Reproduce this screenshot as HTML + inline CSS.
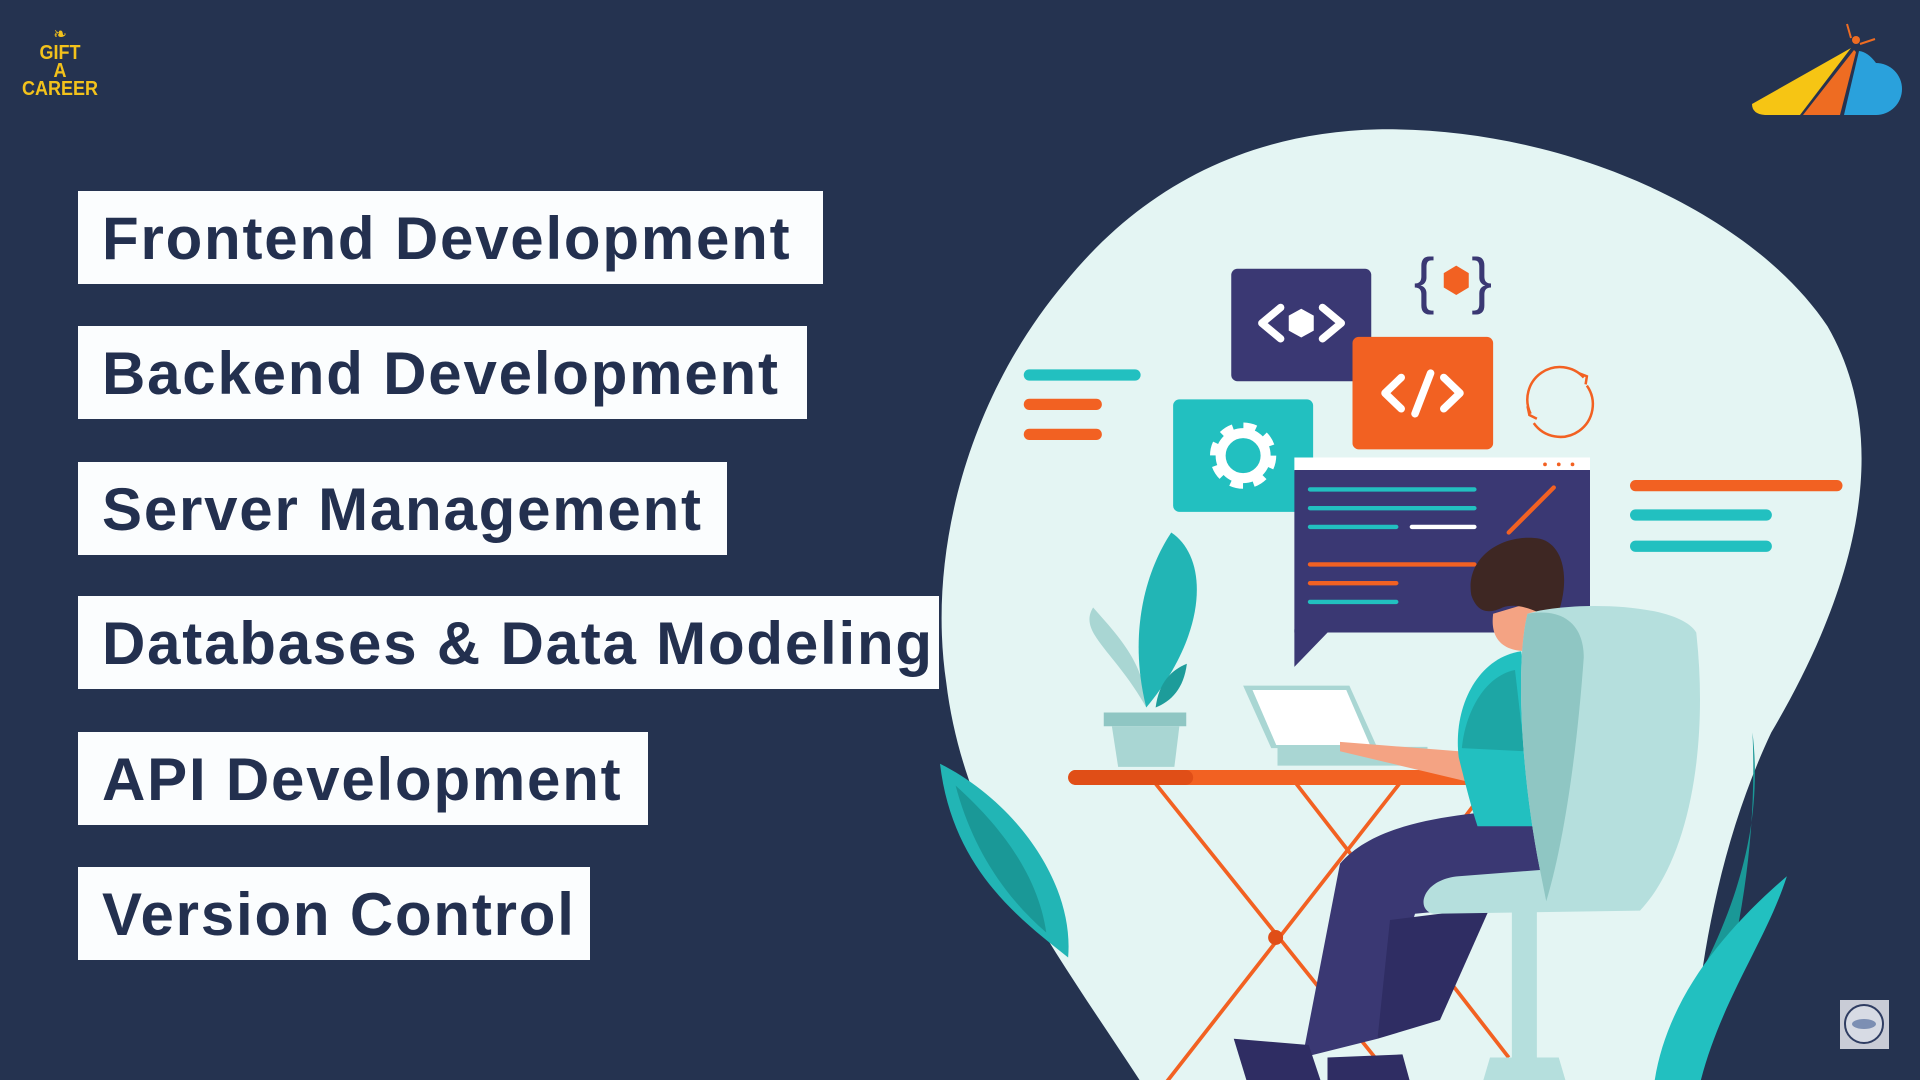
<!DOCTYPE html>
<html><head><meta charset="utf-8"><style>
html,body{margin:0;padding:0;}
body{width:1920px;height:1080px;background:#253350;position:relative;overflow:hidden;font-family:"Liberation Sans",sans-serif;}
.box{position:absolute;left:78px;height:93px;background:#fbfdfe;color:#23304f;font-weight:bold;font-size:60px;line-height:95px;padding-left:24px;box-sizing:border-box;white-space:nowrap;letter-spacing:1.8px;}
.logo{position:absolute;left:14px;top:24px;width:92px;text-align:center;color:#f3c21b;font-family:"Liberation Sans Narrow","Liberation Sans",sans-serif;font-weight:bold;font-size:20px;line-height:18px;transform:scaleX(0.9);}
svg{position:absolute;left:0;top:0;}
</style></head><body>
<div class="logo"><div style="font-size:18px;line-height:20px;font-weight:normal">&#x2767;</div>GIFT<br>A<br>CAREER</div>
<div class="box" style="top:191px;width:745px">Frontend Development</div>
<div class="box" style="top:326px;width:729px">Backend Development</div>
<div class="box" style="top:462px;width:649px">Server Management</div>
<div class="box" style="top:596px;width:861px">Databases &amp; Data Modeling</div>
<div class="box" style="top:732px;width:570px">API Development</div>
<div class="box" style="top:867px;width:512px">Version Control</div>

<svg width="1920" height="1080" viewBox="0 0 1920 1080">
<path d="M1851,48 L1752,104 Q1752,114 1765,115 L1800,115 Z" fill="#f6c514"/>
<path d="M1854,50 L1803,115 L1840,115 L1856,52 Z" fill="#ee6c22"/>
<path d="M1859,51 L1844,115 L1876,115 A26,26 0 0 0 1876,63 Q1868,52 1859,51 Z" fill="#2aa1dc"/>
<circle cx="1856" cy="40" r="4" fill="#ee6c22"/>
<path d="M1847,24 L1851,38 M1860,44 L1875,39" stroke="#ee6c22" stroke-width="2"/>
<g transform="translate(940,120) scale(0.625)">
<path d="M700,15 C1000,10 1300,150 1420,330 C1530,520 1460,760 1330,980 C1250,1150 1210,1350 1200,1568 L340,1568 C200,1350 40,1150 10,900 C-20,700 40,450 200,260 C330,100 500,20 700,15 Z" fill="#e4f5f3"/>
<g stroke-linecap="round" stroke-width="18">
<line x1="143" y1="408" x2="312" y2="408" stroke="#22c0c0"/>
<line x1="143" y1="455" x2="250" y2="455" stroke="#f26122"/>
<line x1="143" y1="503" x2="250" y2="503" stroke="#f26122"/>
<line x1="1113" y1="585" x2="1435" y2="585" stroke="#f26122"/>
<line x1="1113" y1="632" x2="1322" y2="632" stroke="#22c0c0"/>
<line x1="1113" y1="682" x2="1322" y2="682" stroke="#22c0c0"/>
</g>
<rect x="466" y="238" width="224" height="180" rx="10" fill="#3a3873"/>
<path d="M545,300 L515,325 L545,350 M612,300 L642,325 L612,350" stroke="#fff" stroke-width="12" fill="none" stroke-linecap="round" stroke-linejoin="round"/>
<polygon points="578,302 598,313 598,337 578,348 558,337 558,313" fill="#fff"/>
<rect x="660" y="347" width="225" height="180" rx="10" fill="#f26122"/>
<path d="M738,412 L712,437 L738,462 M806,412 L832,437 L806,462 M785,405 L760,470" stroke="#fff" stroke-width="12" fill="none" stroke-linecap="round" stroke-linejoin="round"/>
<rect x="373" y="447" width="224" height="180" rx="10" fill="#22c0c0"/>
<circle cx="485" cy="537" r="42" fill="none" stroke="#fff" stroke-width="22" stroke-dasharray="18 15"/>
<circle cx="485" cy="537" r="36" fill="none" stroke="#fff" stroke-width="16"/>
<text x="758" y="290" font-family="Liberation Sans" font-size="100" fill="#3a3873">{</text>
<text x="850" y="290" font-family="Liberation Sans" font-size="100" fill="#3a3873">}</text>
<polygon points="826,233 846,245 846,268 826,280 806,268 806,245" fill="#f26122"/>
<path d="M1030,412 A52,52 0 0 0 945,470" fill="none" stroke="#f26122" stroke-width="4"/>
<path d="M950,485 A52,52 0 0 0 1035,425" fill="none" stroke="#f26122" stroke-width="4"/>
<path d="M1022,405 L1035,410 L1033,423" fill="none" stroke="#f26122" stroke-width="4"/>
<path d="M940,458 L943,472 L955,478" fill="none" stroke="#f26122" stroke-width="4"/>
<rect x="567" y="540" width="473" height="22" fill="#fff"/>
<circle cx="968" cy="551" r="3" fill="#f26122"/><circle cx="990" cy="551" r="3" fill="#f26122"/><circle cx="1012" cy="551" r="3" fill="#f26122"/>
<rect x="567" y="560" width="473" height="260" fill="#3a3873"/>
<polygon points="567,815 567,875 625,815" fill="#3a3873"/>
<g stroke-linecap="round" stroke-width="7">
<line x1="592" y1="591" x2="855" y2="591" stroke="#22c0c0"/>
<line x1="592" y1="621" x2="855" y2="621" stroke="#22c0c0"/>
<line x1="592" y1="651" x2="730" y2="651" stroke="#22c0c0"/>
<line x1="755" y1="651" x2="855" y2="651" stroke="#fff"/>
<line x1="592" y1="711" x2="855" y2="711" stroke="#f26122"/>
<line x1="592" y1="741" x2="730" y2="741" stroke="#f26122"/>
<line x1="592" y1="771" x2="730" y2="771" stroke="#22c0c0"/>
<line x1="910" y1="660" x2="982" y2="588" stroke="#f26122"/>
</g>
<path d="M330,940 C280,850 220,820 245,780 C280,820 330,870 330,940 Z" fill="#a9d6d3"/>
<path d="M330,940 C300,820 330,720 370,660 C430,700 430,820 330,940 Z" fill="#22b5b5"/>
<path d="M345,940 C350,900 370,880 395,870 C390,910 370,930 345,940 Z" fill="#1d9c9a"/>
<rect x="262" y="948" width="132" height="22" fill="#8fc6c3"/>
<path d="M275,970 L383,970 L375,1035 L285,1035 Z" fill="#a9d6d3"/>
<path d="M0,1030 C120,1090 215,1220 205,1340 C130,1280 20,1200 0,1030 Z" fill="#22b5b5"/>
<path d="M25,1065 C120,1150 160,1230 170,1300 C100,1240 50,1160 25,1065 Z" fill="#1a9897"/>
<path d="M1300,980 C1320,1150 1260,1300 1170,1450 L1140,1568 L1200,1568 C1260,1400 1310,1200 1300,980 Z" fill="#1a9897"/>
<path d="M1355,1210 C1250,1300 1150,1420 1140,1568 L1210,1568 C1240,1420 1320,1320 1355,1210 Z" fill="#22c0c0"/>
<g stroke="#f26122" stroke-width="6">
<line x1="345" y1="1062" x2="700" y2="1505"/>
<line x1="735" y1="1062" x2="340" y2="1568"/>
<line x1="570" y1="1062" x2="910" y2="1500"/>
<line x1="880" y1="1062" x2="700" y2="1300"/>
</g>
<circle cx="537" cy="1308" r="12" fill="#e04e17"/>
<rect x="205" y="1040" width="680" height="24" rx="12" fill="#f26122"/>
<rect x="205" y="1040" width="200" height="24" rx="12" fill="#e04e17"/>
<path d="M485,905 L655,905 L700,1005 L530,1005 Z" fill="#a9d6d3"/>
<path d="M500,912 L650,912 L688,1000 L538,1000 Z" fill="#fff"/>
<rect x="540" y="1003" width="240" height="30" fill="#a9d6d3"/>
<rect x="915" y="1260" width="40" height="260" fill="#b5dfdd"/>
<path d="M860,1568 L880,1500 L990,1500 L1010,1568 Z" fill="#b5dfdd"/>
<path d="M640,1190 C700,1120 830,1110 960,1100 L970,1250 L760,1270 L700,1470 L580,1500 Z" fill="#3a3873"/>
<path d="M720,1280 L880,1260 L800,1440 L700,1470 Z" fill="#2f2d63"/>
<path d="M470,1470 L590,1480 L610,1540 L530,1568 L500,1568 Z" fill="#2f2d63"/>
<path d="M620,1500 L740,1495 L760,1568 L620,1568 Z" fill="#2f2d63"/>
<path d="M640,995 L830,1010 L880,1050 L850,1060 L640,1010 Z" fill="#f4a383"/>
<path d="M830,1020 C820,940 860,860 930,850 L970,1130 L860,1130 C850,1100 840,1060 830,1020 Z" fill="#22c0c0"/>
<path d="M835,1005 C840,950 870,890 920,880 L935,1010 Z" fill="#1da6a5"/>
<path d="M885,790 C880,830 900,850 940,850 L990,840 L985,760 Z" fill="#f4a383"/>
<path d="M850,760 C840,700 900,660 960,670 C1000,680 1010,740 985,800 C960,790 930,770 900,780 C880,790 860,790 850,760 Z" fill="#3e2723"/>
<path d="M940,790 C1000,770 1180,770 1210,820 C1230,1000 1200,1180 1120,1265 L790,1270 C760,1265 770,1215 830,1210 L960,1200 C930,1050 920,870 940,790 Z" fill="#b5dfdd"/>
<path d="M940,790 C1000,780 1030,810 1030,860 C1020,1000 1000,1150 970,1250 L960,1200 C930,1050 920,870 940,790 Z" fill="#8fc6c3"/>
</g>
<rect x="1840" y="1000" width="49" height="49" fill="#c9ccd6"/>
<circle cx="1864" cy="1024" r="19" fill="#d7dbe4" stroke="#2f3d62" stroke-width="2"/>
<ellipse cx="1864" cy="1024" rx="12" ry="5" fill="#7c8fb3"/>
</svg>
</body></html>
